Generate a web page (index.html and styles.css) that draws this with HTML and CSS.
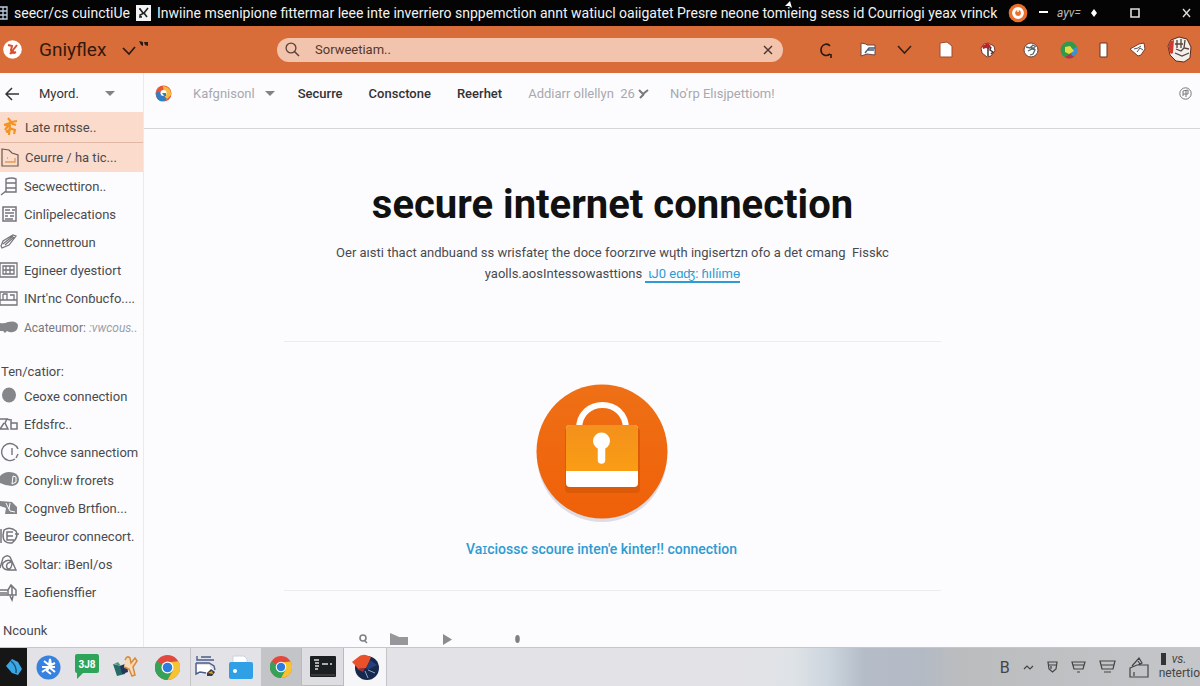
FILE: index.html
```html
<!DOCTYPE html>
<html lang="en">
<head>
    <meta charset="utf-8">
    <meta name="viewport" content="width=device-width, initial-scale=1">
    <title>secure internet connection</title>
    <link rel="stylesheet" href="styles.css">
</head>
<body>
    <header class="titlebar">
        <svg class="tb-icon" width="8" height="14" viewBox="0 0 8 14"><path d="M0 1h7v12H0M0 5h7M0 9h7M3 1v12" fill="none" stroke="#bcd" stroke-width="1.3"/></svg>
        <span class="tb-tab">seecr/cs cuinctiUe</span>
        <svg class="tb-fav" width="15" height="16" viewBox="0 0 15 16"><path d="M0 0h15v16H0z" fill="#f4f4f4"/><path d="M4 4l3 4M5 12l-1-2 4-2 3 4M3 12h3M8 8l4-5M3 4h2" fill="none" stroke="#222" stroke-width="1.6"/></svg>
        <span class="tb-title">Inwiine msenipione fittermar leee inte inverriero snppemction annt watiucl oaiigatet Presre neone tomieing sess id Courriogi yeax vrinck</span>
        <svg class="tb-ring" width="20" height="20" viewBox="0 0 20 20"><circle cx="10" cy="10" r="9.3" fill="#e8702c"/><circle cx="10" cy="10" r="4.4" fill="#e8702c" stroke="#fff" stroke-width="3"/><path d="M10 7v2" stroke="#fff" stroke-width="1.5"/></svg>
        <div class="win">
            <button aria-label="Minimize"><svg width="9" height="10" viewBox="0 0 9 10"><path d="M0 4h9" stroke="#fff" stroke-width="2"/></svg></button>
            <span class="win-text">ayv=</span>
            <svg width="6" height="8" viewBox="0 0 6 8"><path d="M3 0l3 4-3 4-3-4z" fill="#fff"/></svg>
            <button class="win-max" aria-label="Maximize"><svg width="10" height="10" viewBox="0 0 10 10"><path d="M1 1h8v8H1z" fill="none" stroke="#ddd" stroke-width="1.6"/></svg></button>
            <button class="win-close" aria-label="Close"><svg width="9" height="10" viewBox="0 0 9 10"><path d="M1 1l7 8M8 1L1 9" stroke="#ddd" stroke-width="1.4"/></svg></button>
        </div>
        <svg class="cursor" width="8" height="7" viewBox="0 0 8 7"><path d="M0 5l5-5 2 7-3-2z" fill="#fff"/></svg>
    </header>

    <div class="toolbar">
        <div class="brand">
            <svg width="19" height="19" viewBox="0 0 19 19"><circle cx="9.500" cy="9.500" r="9.300" fill="#fff"/><path d="M5 5l4 1-1 4 1 4M14 5l-7 9M9 10l2 3 2-1" fill="none" stroke="#d94f34" stroke-width="2"/></svg>
            <span class="brand-name">Gniyflex</span>
            <button aria-label="Switch"><svg width="28" height="20" viewBox="0 0 28 20"><path d="M1 8l6 6 6-7" fill="none" stroke="#2a1a12" stroke-width="1.7"/><path d="M17 1l4 1v4l-2-1zM22 2l4 0v4l-3-1z" fill="#2a1a12"/></svg></button>
        </div>
        <label class="search">
            <svg width="15" height="15" viewBox="0 0 15 15"><circle cx="6" cy="6" r="4.900" fill="none" stroke="#5d4036" stroke-width="1.300"/><path d="M9.500 9.500L14 14" stroke="#5d4036" stroke-width="1.500"/></svg>
            <input type="text" value="Sorweetiam.." aria-label="Search">
            <button aria-label="Clear"><svg width="10" height="10" viewBox="0 0 10 10"><path d="M1 1l8 8M9 1L1 9" stroke="#4a342c" stroke-width="1.4"/></svg></button>
        </label>
        <nav class="tools">
            <button aria-label="Reload"><svg width="14" height="16" viewBox="0 0 14 16"><path d="M11 4C8 0 2 3 2 8s5 7 9 4M12 12v4" fill="none" stroke="#2a1a12" stroke-width="1.6"/></svg></button>
            <button aria-label="Mail"><svg width="16" height="16" viewBox="0 0 16 16"><path d="M1 1l5 1 1 1h8v10l-8-1-6 2z" fill="#fff" stroke="#6c4940" stroke-width="1"/><path d="M5 11l4-5h6M8 8h6" fill="none" stroke="#4a5a78" stroke-width="1.300"/></svg></button>
            <button aria-label="More"><svg width="15" height="10" viewBox="0 0 15 10"><path d="M1 1l6.500 7L14 1" fill="none" stroke="#3a2014" stroke-width="1.600"/></svg></button>
            <button aria-label="Page"><svg width="14" height="17" viewBox="0 0 14 17"><path d="M1 2l7-1 5 4v11H1z" fill="#fff" stroke="#a04a28"/></svg></button>
            <button aria-label="Shield"><svg width="16" height="16" viewBox="0 0 16 16"><path d="M8 1l6 3 1 5-4 5-4 1-5-4-1-5 3-4z" fill="#fff" stroke="#7a3a28"/><path d="M2 4l6-3 3 3-2 3-3-1-3 1z" fill="#b8222a"/><path d="M8 6v8M11 5l-1 3 3 2-2 2" fill="none" stroke="#433" stroke-width="1.500"/></svg></button>
            <button aria-label="Globe"><svg width="16" height="16" viewBox="0 0 16 16"><circle cx="8" cy="8" r="7" fill="#fff" stroke="#6a4036"/><path d="M3 5l4 1 3-3 3 2M5 9l4-2 3 1-2 4-3 1M8 6l4 0" fill="none" stroke="#566" stroke-width="1.300"/></svg></button>
            <button aria-label="Colors"><svg width="18" height="18" viewBox="0 0 18 18"><circle cx="9" cy="9" r="8.500" fill="#2f9a4d"/><path d="M10 9l7-3a8.500 8.500 0 0 1-4 10z" fill="#3f8fd0"/><path d="M5 16l5-3 4 3q-5 3-9 0z" fill="#c32c50"/><path d="M5 6l5-1 4 5-5 3-4-2z" fill="#e4dc3c"/></svg></button>
            <button aria-label="Phone"><svg width="9" height="16" viewBox="0 0 9 16"><path d="M1 1h7v14H1z" fill="#fff" stroke="#6a3020"/></svg></button>
            <button aria-label="Tag"><svg width="17" height="15" viewBox="0 0 17 15"><path d="M1 7l9-5 5-1 1 6-4 6-3 1z" fill="#fff" stroke="#7a3a28"/><path d="M5 7l4-1 3-2M8 10l3-4 3 2" fill="none" stroke="#555"/></svg></button>
            <button class="avatar" aria-label="Account"><svg width="25" height="27" viewBox="0 0 25 27"><path d="M4 4l8-3 8 2 4 8-1 11-6 4-8-1-6-6-2-9z" fill="#f4eeea" stroke="#5a2a20"/><path d="M4 5l3-1-1 13-2 1q-5-7 0-13z" fill="#cf3a2c"/><path d="M10 4v8M14 3v9M18 4l-1 8 5 1M9 13l5 2 3-3M8 17l7 3 7-3M8 8h8" fill="none" stroke="#54443f" stroke-width="1.300"/></svg></button>
        </nav>
    </div>

    <div class="app">
        <aside class="sidebar">
            <div class="side-top">
                <button aria-label="Back"><svg width="15" height="14" viewBox="0 0 15 14"><path d="M7 1L1 7l6 6M1 7h13" fill="none" stroke="#333" stroke-width="1.500"/></svg></button>
                <button class="side-menu">Myord.<span class="caret"></span></button>
            </div>
            <nav class="side-list">
                <a class="hot" href="#"><svg width="18" height="20" viewBox="0 0 18 20"><path d="M7 1l3 4 6-1M3 8l6-2 6 2M9 6l-5 7M9 8l-1 10M8 11l6 2-1 4M5 15l5-3" fill="none" stroke="#f39322" stroke-width="2.200"/></svg>Late rntsse..</a>
                <a class="hot" href="#"><svg width="18" height="20" viewBox="0 0 18 20"><path d="M1 1l7 1 3 3 6 2v11H1z" fill="none" stroke="#6b5750" stroke-width="1.200"/><path d="M4 14h10v-4M6 10h1" fill="none" stroke="#e59a55" stroke-width="1.300"/></svg>Ceurre / ha tic...</a>
                <a href="#"><svg width="18" height="20" viewBox="0 0 18 20"><path d="M6 3q6-2 10 0v13H6zM6 7h10M6 12h10M6 15l-5 4" fill="none" stroke="#74747a" stroke-width="1.400"/></svg>Secwecttiron..</a>
                <a href="#"><svg width="18" height="20" viewBox="0 0 18 20"><path d="M3 3h13v14H3zM5 6h5M12 6h3M5 9h9M5 12h3M10 12h4M5 15h8" fill="none" stroke="#74747a" stroke-width="1.500"/></svg>Cinlîpelecations</a>
                <a href="#"><svg width="18" height="20" viewBox="0 0 18 20"><path d="M1 14l2-5 10-6 3 1-7 9-7 3zM3 12l10-8M5 13l9-8" fill="none" stroke="#74747a" stroke-width="1.200"/></svg>Connettroun</a>
                <a href="#"><svg width="18" height="20" viewBox="0 0 18 20"><path d="M0 3h17v14H0zM3 6h11v8H3zM6 6v8M10 6v8M3 10h11" fill="none" stroke="#74747a" stroke-width="1.300"/></svg>Egineer dyestiort</a>
                <a href="#"><svg width="18" height="20" viewBox="0 0 18 20"><path d="M0 4h17v13H0zM0 12h17M3 6v6M3 6h4v6M10 7h4v5" fill="none" stroke="#74747a" stroke-width="1.300"/></svg>INrt'nc Conɓucfo....</a>
                <a class="faint" href="#"><svg width="18" height="20" viewBox="0 0 18 20"><path d="M0 5q4 1 8-1 8-2 10 3 0 6-5 7-3 1-6-1l-2 2-2-2H0z" fill="#85868a"/></svg>Acateumor: <i>:vwcous..</i></a>
            </nav>
            <h2 class="side-head">Ten/catior:</h2>
            <nav class="side-list">
                <a href="#"><svg width="18" height="20" viewBox="0 0 18 20"><ellipse cx="9" cy="9" rx="7" ry="7.500" fill="#85868a"/></svg>Ceoxe connection</a>
                <a href="#"><svg width="18" height="20" viewBox="0 0 18 20"><path d="M0 5h7l-2 4 3 6H0l4-6M7 5l3 1M11 5v10h6V9h-6" fill="none" stroke="#74747a" stroke-width="1.500"/></svg>Efdsfrc..</a>
                <a href="#"><svg width="20" height="20" viewBox="0 0 20 20"><path d="M15 17A8.500 8.500 0 1 1 18 7M18 12l-2 4M12 6v7" fill="none" stroke="#74747a" stroke-width="1.400"/></svg>Cohvce sannectiom</a>
                <a href="#"><svg width="20" height="20" viewBox="0 0 20 20"><path d="M0 6q4-4 9-4 9 0 10 7 0 6-7 7-6 0-12-3z" fill="#85868a"/><path d="M13 6l3 1v5l-4 2z" fill="none" stroke="#fff"/></svg>Conyli:w frorets</a>
                <a href="#"><svg width="18" height="20" viewBox="0 0 18 20"><path d="M0 3l12 1 5 5v7H5l1-6-6-2z" fill="#85868a"/><path d="M6 5l4 8 5 1M10 5l-1 6" fill="none" stroke="#fff"/></svg>Cognveɓ Brtfion...</a>
                <a href="#"><svg width="20" height="20" viewBox="0 0 20 20"><path d="M1 3v14M4 4q6-4 12 1 3 6-4 12-9 1-9-8zM13 6H7v8h7M7 10h6M15 8h4" fill="none" stroke="#74747a" stroke-width="1.500"/></svg>Beeuror connecort.</a>
                <a href="#"><svg width="18" height="20" viewBox="0 0 18 20"><path d="M0 14L3 4q4-4 7-1l6 13H8q-7-1-5-7 5-5 9-1 0 7-4 7-3-3 0-6l3-1" fill="none" stroke="#74747a" stroke-width="1.400"/></svg>Soltar: iBenl/os</a>
                <a href="#"><svg width="18" height="20" viewBox="0 0 18 20"><path d="M0 8h8l3-5 5 5v5H0M0 11h7M8 8v5M12 5v8M10 14l2 4 1-4" fill="none" stroke="#74747a" stroke-width="1.500"/></svg>Eaofiensffier</a>
            </nav>
            <h2 class="side-head side-foot">Ncounk</h2>
        </aside>

        <main class="main">
            <nav class="tabs">
                <svg width="17" height="17" viewBox="0 0 17 17"><circle cx="8.500" cy="8.500" r="8" fill="#e9573a"/><path d="M8 1a8 8 0 0 1 8 9l-5 5-2-6z" fill="#f5bd3c"/><path d="M1 8q3-3 6 1l5 5q-3 3-7 2-4-2-4-8z" fill="#2f7fc8"/><circle cx="8.500" cy="8" r="3" fill="#fff"/><path d="M7 8h4v3H9z" fill="#2f7fc8"/></svg>
                <button class="tab dim drop">Kafgnisonl<span class="caret"></span></button>
                <a class="tab" href="#">Securre</a>
                <a class="tab" href="#">Consctone</a>
                <a class="tab" href="#">Reerhet</a>
                <a class="tab dim more" href="#">Addiarr ollellyn&nbsp; 26<svg width="11" height="10" viewBox="0 0 11 10"><path d="M1 1l4 4 5-4M6 5L2 9" fill="none" stroke="#77777c" stroke-width="2"/></svg></a>
                <a class="tab dim" href="#">No'rp Elısjpettiom!</a>
                <button class="tab-end" aria-label="Status"><svg width="13" height="13" viewBox="0 0 13 13"><circle cx="6.500" cy="6.500" r="5.700" fill="none" stroke="#77777c"/><path d="M4 9V4l5-1v4H4M7 3v7" fill="none" stroke="#77777c"/></svg></button>
            </nav>

            <div class="content">
                <section class="intro">
                    <h1>secure internet connection</h1>
                    <p>Oer aısti thact andbuand ss wrisfateɽ the doce foorzırve wɥth ingisertzn ofo a det cmang&nbsp; Fisskc<br>yaolls.aosIntessowasttions <a href="#">&nbsp;ɩJ0 eɑʤ: ɦılíımɵ</a></p>
                </section>
                <section class="lock">
                    <svg width="140" height="142" viewBox="0 0 140 142">
                        <defs>
                            <linearGradient id="disc" x1="0" y1="0" x2="0" y2="1"><stop offset="0" stop-color="#ee7016"/><stop offset="1" stop-color="#f06008"/></linearGradient>
                            <linearGradient id="body" x1="0" y1="0" x2="0" y2="1"><stop offset="0" stop-color="#f4901c"/><stop offset="1" stop-color="#fa9d14"/></linearGradient>
                        </defs>
                        <ellipse cx="70" cy="73" rx="65" ry="66" fill="#dcdce4"/>
                        <ellipse cx="70" cy="68.500" rx="65.500" ry="67" fill="url(#disc)"/>
                        <path d="M47 46C47 14 94 14 94 46" fill="none" stroke="#fff" stroke-width="6"/>
                        <rect x="33" y="45" width="75" height="65" rx="4" fill="#dd5a08"/>
                        <rect x="34" y="42" width="72" height="62" rx="4" fill="#fff"/>
                        <path d="M34 88V46q0-4 4-4h64q4 0 4 4v42z" fill="url(#body)"/>
                        <circle cx="69.500" cy="58" r="8.500" fill="#fff"/>
                        <path d="M69.500 60v17" stroke="#fff" stroke-width="7.500" stroke-linecap="round"/>
                    </svg>
                    <a href="#">Vaɪciossc scoure inten'e kinter!! connection</a>
                </section>
                <div class="strip">
                    <svg width="10" height="10" viewBox="0 0 10 10"><circle cx="5" cy="4" r="3" fill="none" stroke="#808084" stroke-width="1.600"/><path d="M6 6l3 3" stroke="#808084" stroke-width="1.500"/></svg>
                    <svg width="18" height="12" viewBox="0 0 18 12"><path d="M0 0l7 3 2 1h9v8H0z" fill="#97979b"/></svg>
                    <svg width="9" height="11" viewBox="0 0 9 11"><path d="M0 0l9 5.500L0 11z" fill="#8c8c90"/></svg>
                    <svg width="5" height="8" viewBox="0 0 5 8"><ellipse cx="2.500" cy="4" rx="2.300" ry="4" fill="#808084"/></svg>
                </div>
            </div>
        </main>
    </div>

    <footer class="taskbar">
        <button class="task t-start" aria-label="Start"><svg width="18" height="18" viewBox="0 0 18 18"><path d="M1 8l6-7 6 3 4 7-4 6-6-2z" fill="#3aa7e4"/><path d="M6 3q6 5 5 12" stroke="#15577c" fill="none" stroke-width="1.500"/></svg></button>
        <button class="task t-wide" aria-label="Bluetooth"><svg width="25" height="25" viewBox="0 0 25 25"><circle cx="12.500" cy="12.500" r="12" fill="#3781e0"/><path d="M8 6l5 4 1-6 1 6 4-2M6 12l7 0 6 0M13 12l6 5M13 12l-2 4 4 3M12 13l-6 4" fill="none" stroke="#fff" stroke-width="2"/></svg></button>
        <button class="task t-msg" aria-label="Messages"><svg width="24" height="26" viewBox="0 0 24 26"><path d="M2 0h20q2 0 2 2v15q0 2-2 2H8l-6 6V19q-2 0-2-2V2q0-2 2-2z" fill="#2ea45a"/><text x="12" y="14" text-anchor="middle" class="badge-text">3J8</text></svg></button>
        <button class="task t-mid" aria-label="Files"><svg width="26" height="22" viewBox="0 0 26 22"><path d="M1 8l8 2 6-2-2 10-8 2z" fill="#276b68"/><path d="M8 10l7-3 1 9-6 2z" fill="#24365c"/><path d="M2 8l4-2 3 4z" fill="#4a9a78"/><path d="M13 4q2-5 5-2l1 5 4-5 2 3-4 6 2 8-3 1-3-7-5-2" fill="#f7d9b4" stroke="#d78b3e" stroke-width="1.500"/></svg></button>
        <button class="task t-last" aria-label="Browser"><svg width="25" height="25" viewBox="0 0 24 24"><use href="#wheel"/></svg></button>
        <button class="task t-thin" aria-label="Notes"><svg width="22" height="22" viewBox="0 0 22 22"><path d="M2 9h12l4 5-8 3-8 1z" fill="#fff"/><path d="M2 0v4h17M6 1h10M1 7h13l5 3 1 4M1 7v11l4-2 6 1" fill="none" stroke="#4b5d8a" stroke-width="1.400"/><path d="M12 17l4-4 4 3-3 4-5 0z" fill="#383e46"/><path d="M13 17l4-2 1 3z" fill="#f09a26"/></svg></button>
        <button class="task t-store" aria-label="Store"><svg width="24" height="24" viewBox="0 0 24 24"><path d="M4 8V1h11l3 3v4" fill="#fff" stroke="#ccd2dc"/><rect y="7" width="24" height="17" rx="2" fill="#2fa0e6"/><circle cx="6" cy="16" r="2" fill="#fff"/></svg></button>
        <button class="task t-grey" aria-label="Browser window"><svg width="22" height="22" viewBox="0 0 24 24"><g id="wheel"><circle cx="12" cy="12" r="12" fill="#e2483c"/><path d="M12 12L1.500 6A12 12 0 0 0 12 24l5-9z" fill="#35a257"/><path d="M12 24A12 12 0 0 0 22.500 6L12 7l5 8z" fill="#f6c332"/><circle cx="12" cy="12" r="5.800" fill="#fff"/><circle cx="12" cy="12" r="4.600" fill="#2d7de0"/></g></svg></button>
        <button class="task t-open" aria-label="Terminal"><svg width="26" height="21" viewBox="0 0 26 21"><rect width="26" height="21" rx="1" fill="#1c1f22"/><path d="M4 4h5M5 7h4M5 10h4M5 13h3M12 8h6M20 8h2" stroke="#dcdcdc" stroke-width="1.300"/><path d="M1 19h24" stroke="#555"/></svg></button>
        <button class="task t-active" aria-label="Media"><svg width="28" height="27" viewBox="0 0 28 27"><circle cx="16" cy="14" r="12" fill="#17284d"/><path d="M1 8l5-4q4-4 9-3l5 2-2 5-3 6-8 1-3-4z" fill="#e9512b"/><path d="M15 15l4-9 7 5-8 4z" fill="#24407a"/><path d="M14 17l3 7M17 16l7 3" stroke="#8aa6d0" fill="none"/><path d="M6 15l8-1-2 4z" fill="#a32c38"/></svg></button>
        <div class="tray">
            <span class="tray-b">B</span>
            <svg width="11" height="7" viewBox="0 0 11 7"><path d="M1 5l3-3 3 3 3-3" fill="none" stroke="#444" stroke-width="1.200"/></svg>
            <svg width="11" height="12" viewBox="0 0 11 12"><path d="M1 1h9L9 8l-3.500 3L2 8zM1 4h9M4 5v3" fill="none" stroke="#444" stroke-width="1.200"/></svg>
            <svg width="15" height="12" viewBox="0 0 15 12"><path d="M1 1h13l-2 7H3zM2 4h11M6 11h3" fill="none" stroke="#444" stroke-width="1.200"/></svg>
            <svg width="17" height="14" viewBox="0 0 17 14"><path d="M1 1h15l-2 8H3zM2 5h13M5 12h7" fill="none" stroke="#444" stroke-width="1.200"/></svg>
            <svg width="20" height="21" viewBox="0 0 20 21"><path d="M1 11l7-3h11v12H1zM3 9l7-8 3 5-4 2M5 15v4M9 4l2 3" fill="none" stroke="#444" stroke-width="1.200"/></svg>
            <div class="clock"><span class="clock-top">vs.</span><span>netertio</span></div>
        </div>
    </footer>
</body>
</html>
```

FILE: styles.css
```css
* {
    box-sizing: border-box;
}

body {
    margin: 0;
    height: 100vh;
    display: flex;
    flex-direction: column;
    overflow: hidden;
    font-family: Roboto, "Liberation Sans", sans-serif;
    font-size: 13px;
    color: #4a4a4e;
    background: #fcfcfe;
}

button {
    padding: 0;
    border: 0;
    background: none;
    font: inherit;
    color: inherit;
    display: flex;
    align-items: center;
    justify-content: center;
    cursor: pointer;
}

a {
    color: inherit;
    text-decoration: none;
}

svg {
    flex: none;
    display: block;
}

/* window title */
.titlebar {
    position: relative;
    flex: none;
    display: flex;
    align-items: center;
    height: 26px;
    padding-right: 9px;
    background: #040404;
    color: #f2f2f2;
    font-size: 14px;
    white-space: nowrap;
}

.tb-tab {
    margin-left: 6px;
    width: 122px;
}

.tb-title {
    flex: 1;
    min-width: 0;
    margin: 0 9px 0 6px;
    overflow: hidden;
}

.win {
    display: flex;
    align-items: center;
    gap: 9px;
    margin-left: 11px;
}

.win-text {
    width: 25px;
    font-size: 12px;
    font-style: italic;
    color: #bbb;
}

.win-max {
    margin-left: 24px;
}

.win-close {
    margin-left: 33px;
}

.cursor {
    position: absolute;
    left: 785px;
    top: 1px;
}

/* orange bar */
.toolbar {
    flex: none;
    display: flex;
    align-items: center;
    height: 47px;
    padding: 0 8px 0 3px;
    background: #d96d3a;
}

.brand {
    display: flex;
    align-items: center;
    width: 274px;
    color: #33190d;
}

.brand-name {
    margin: 0 16px 0 17px;
    font-size: 19px;
}

.search {
    flex: 1;
    display: flex;
    align-items: center;
    height: 24px;
    padding: 0 10px 0 8px;
    border-radius: 12px;
    background: #f2c4ae;
}

.search input {
    flex: 1;
    min-width: 0;
    margin-left: 15px;
    padding: 0;
    border: 0;
    outline: 0;
    background: none;
    font: inherit;
    color: #54382c;
}

.tools {
    display: flex;
    align-items: center;
    gap: 21px;
    margin-left: 36px;
}

.tools button:nth-child(1),
.tools button:nth-child(3),
.tools button:nth-child(4),
.tools button:nth-child(5) {
    margin-right: 6px;
}

/* two columns */
.app {
    flex: 1;
    min-height: 0;
    display: flex;
}

.sidebar {
    flex: none;
    width: 144px;
    border-right: 1px solid #e9e9ee;
    overflow: hidden;
    white-space: nowrap;
}

.side-top {
    display: flex;
    align-items: center;
    height: 39px;
    padding: 2px 0 0 5px;
    font-size: 13px;
    color: #333;
}

.side-menu {
    margin-left: 19px;
    gap: 26px;
}

.caret {
    border: 5px solid transparent;
    border-top-color: #828286;
    border-bottom: 0;
}

.side-list a {
    display: flex;
    align-items: center;
    height: 28px;
}

.side-list svg {
    margin-right: 6px;
}

.side-list svg[width="20"] {
    margin-right: 4px;
}

.side-list .hot {
    height: 30px;
    padding-left: 1px;
    background: #fbdccc;
}

.side-list .hot + .hot {
    border-top: 1px solid #e2b8a4;
}

.side-list .faint {
    height: 32px;
    color: #77777c;
    font-size: 12px;
}

.side-list .faint i {
    margin-left: 3px;
    color: #98a0aa;
}

.side-head {
    margin: 17px 0 0;
    padding-left: 1px;
    line-height: 21px;
    font-size: 13px;
    font-weight: 400;
}

.side-foot {
    margin-top: 14px;
    padding-left: 3px;
}

.main {
    flex: 1;
    min-width: 0;
    display: flex;
    flex-direction: column;
}

.tabs {
    flex: none;
    display: flex;
    align-items: center;
    height: 56px;
    padding: 0 8px 14px 11px;
    border-bottom: 1px solid #d5d5da;
}

.tab {
    margin-right: 26px;
    font-size: 13px;
    font-weight: 500;
    color: #333;
    white-space: nowrap;
}

.drop {
    gap: 10px;
    margin: 0 23px 0 21px;
}

.dim {
    font-weight: 400;
    color: #a8a8ae;
}

.more {
    display: flex;
    align-items: center;
    gap: 3px;
    margin-right: 21px;
}

.tab-end {
    margin-left: auto;
}

.content {
    flex: 1;
    min-height: 0;
    padding: 0 259px 0 140px;
    overflow: hidden;
}

.intro {
    padding: 48px 0 57px;
    border-bottom: 1px solid #ececf0;
    text-align: center;
}

.intro h1 {
    margin: 0;
    line-height: 56px;
    font-size: 40px;
    font-weight: 700;
    color: #111;
    white-space: nowrap;
}

.intro p {
    margin: 9px -20px 0;
    line-height: 21px;
    font-size: 13px;
    white-space: nowrap;
}

.intro p a {
    border-bottom: 2px solid #2e9bd2;
    color: #2e9bd2;
}

.lock {
    display: flex;
    flex-direction: column;
    align-items: center;
    padding: 41px 22px 31px 0;
    border-bottom: 1px solid #ececf0;
}

.lock a {
    margin-top: 14px;
    line-height: 20px;
    font-size: 14px;
    font-weight: 500;
    color: #2e9bd2;
    white-space: nowrap;
}

.strip {
    display: flex;
    align-items: center;
    padding: 42px 0 0 74px;
}

.strip svg {
    margin-right: 22px;
}

.strip svg:nth-child(2) {
    margin-right: 35px;
}

.strip svg:nth-child(3) {
    margin-right: 63px;
}

/* bottom bar */
.taskbar {
    flex: none;
    display: flex;
    height: 39px;
    border-top: 1px solid #c6c6cb;
    background: linear-gradient(90deg, #e2e2e7 62%, #dfe3e6 66%, #cdd5de 69%, #b4bcc8 72%, #b4bac4 77%, #bbbcbe 80%, #c5c6c9);
}

.task {
    width: 40px;
}

.task.t-start {
    width: 27px;
    background: #161616;
}

.t-wide {
    width: 42px;
}

.t-msg {
    width: 36px;
}

.task.t-last {
    width: 46px;
    border-right: 1px solid #c4c4c9;
}

.task.t-thin {
    width: 30px;
}

.task.t-grey {
    background: #c3c4c8;
}

.task.t-open {
    width: 43px;
    background: #dedee2;
    border: 1px solid #bbb;
    border-top: 0;
}

.task.t-active {
    width: 43px;
    background: #f6f6f9;
    border-right: 1px solid #c4c4c9;
}

.badge-text {
    font-size: 10px;
    font-weight: 700;
    fill: #fff;
}

.tray {
    display: flex;
    align-items: center;
    gap: 13px;
    margin-left: auto;
    color: #444;
}

.tray-b {
    font-size: 16px;
}

.clock {
    display: flex;
    flex-direction: column;
    margin-left: -3px;
    line-height: 17px;
    font-size: 12px;
}

.clock-top {
    margin-left: 2px;
    padding-left: 6px;
    border-left: 5px solid #333;
    line-height: 12px;
    font-style: italic;
}
```
